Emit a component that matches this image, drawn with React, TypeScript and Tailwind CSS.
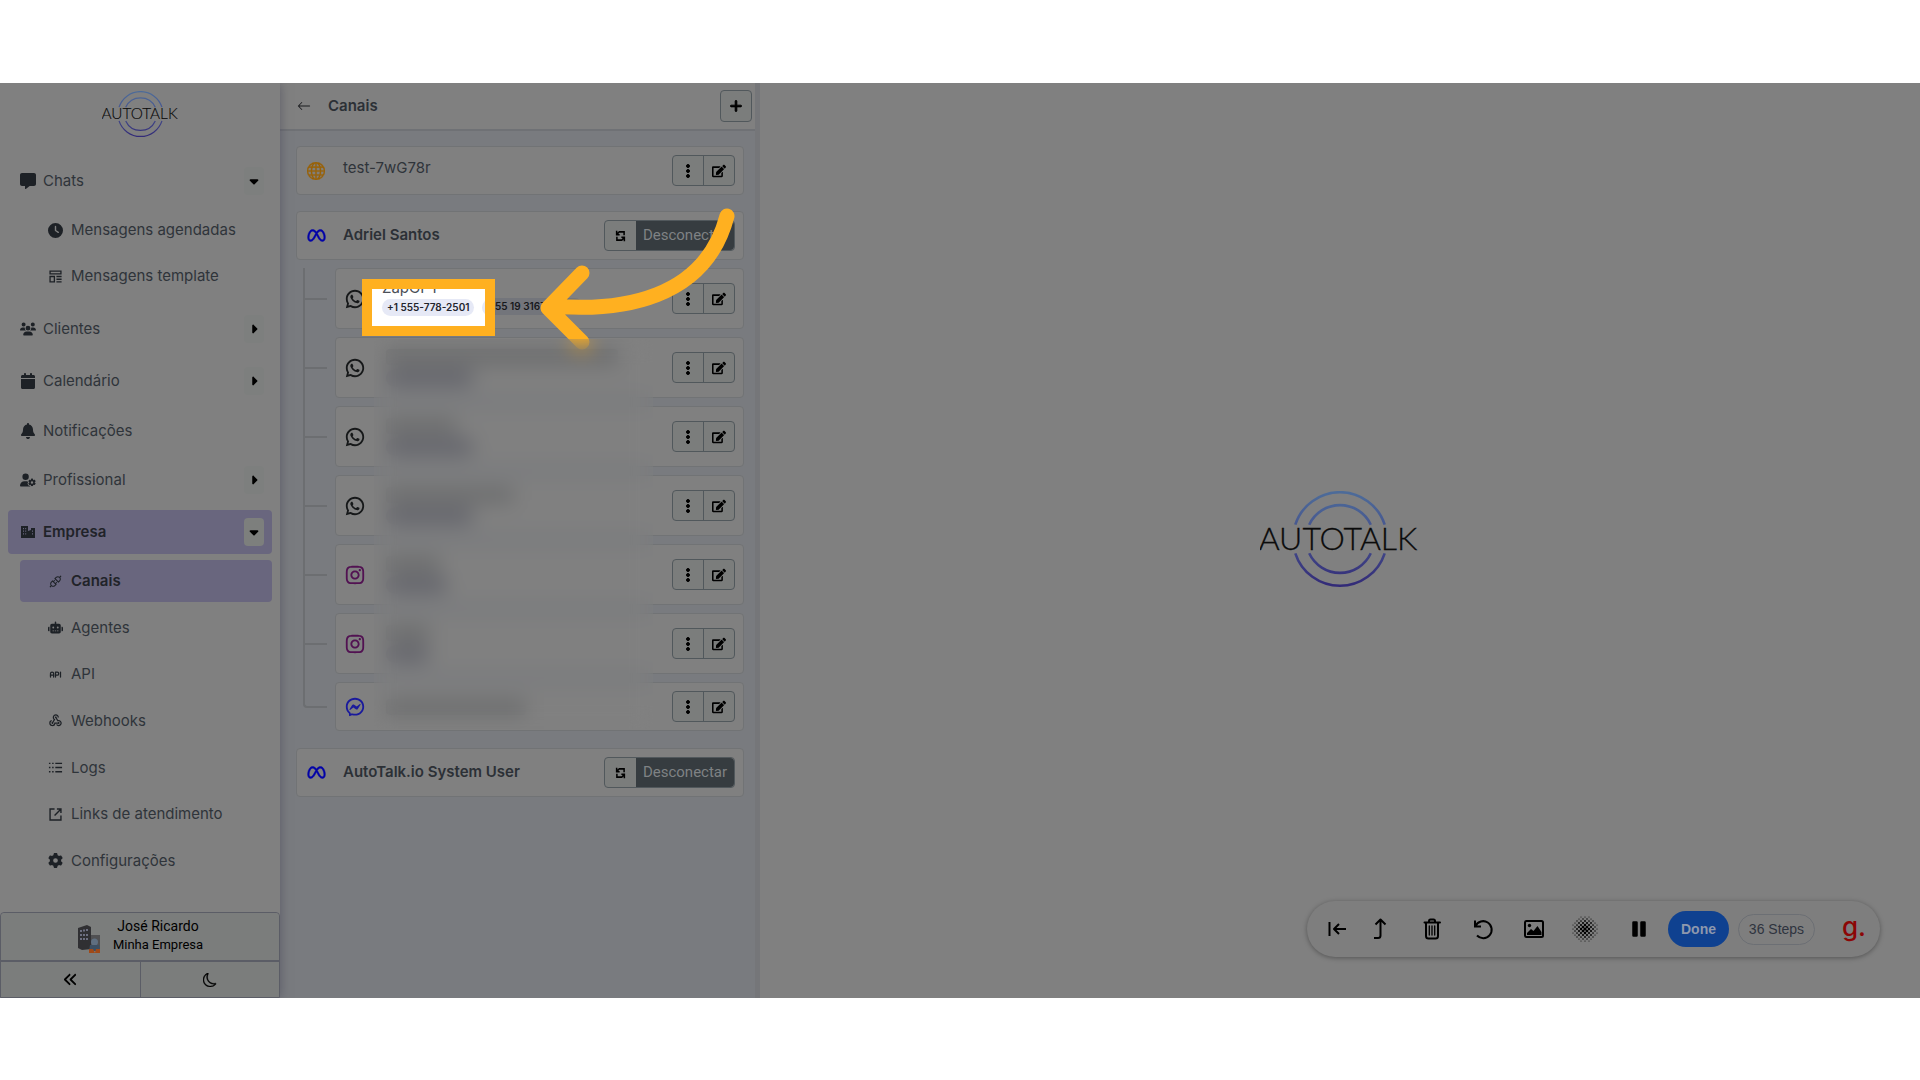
import React from "react";
import { AiOutlineApi } from "react-icons/ai";
import { BsArrowLeft, BsGlobe, BsMoon, BsThreeDotsVertical } from "react-icons/bs";
import {
  FaAnglesLeft,
  FaBell,
  FaCalendar,
  FaCaretDown,
  FaCaretRight,
  FaClock,
  FaGear,
  FaMessage,
  FaPlus,
  FaRobot,
  FaUserGear,
  FaUsers,
} from "react-icons/fa6";
import { FaEdit } from "react-icons/fa";
import { MdWebhook } from "react-icons/md";
import { RiInstagramLine, RiMessengerLine, RiMetaLine, RiWhatsappLine } from "react-icons/ri";
import { TbApi } from "react-icons/tb";

type IconType = React.ComponentType<{ className?: string }>;

const TemplateIcon: IconType = ({ className }) => (
  <svg viewBox="0 0 16 16" className={className} fill="none" stroke="currentColor" strokeWidth="1.4">
    <path d="M2.2 2.2h11.6v3H2.2zM2.2 8h4.6v5.8H2.2zM9 8h5.5M9 10.9h5.5M9 13.8h5.5" />
  </svg>
);

const CompanyIcon: IconType = ({ className }) => (
  <svg viewBox="0 0 16 16" className={className}>
    <path
      fill="currentColor"
      fillRule="evenodd"
      d="M1 2h7v5l3-1V4h4v10H1zM3 4v1.2h1V4zm2.2 0v1.2h1V4zM3 6.6v1.2h1V6.6zm2.2 0v1.2h1V6.6zM3 9.2v1.2h1V9.2zm2.2 0v1.2h1V9.2zM12 6.6v1.2h1V6.6zm0 2.6v1.2h1V9.2z"
    />
  </svg>
);

const LogsIcon: IconType = ({ className }) => (
  <svg viewBox="0 0 16 16" className={className} fill="none" stroke="currentColor" strokeWidth="1.4">
    <path d="M1 3.5h1.6M4.4 3.5H6M7.8 3.5H15M1 8h1.6M4.4 8H6M7.8 8H15M1 12.5h1.6M4.4 12.5H6M7.8 12.5H15" />
  </svg>
);

const LinkIcon: IconType = ({ className }) => (
  <svg viewBox="0 0 16 16" className={className} fill="none" stroke="currentColor" strokeWidth="1.5">
    <path d="M7 2.2H2.2v11.6h11.6V9M9.5 2.2h4.3v4.3M13.6 2.4 7 9" />
  </svg>
);

const SyncIcon: IconType = ({ className }) => (
  <svg viewBox="0 0 12 14" className={className} fill="none" stroke="currentColor" strokeWidth="1.8">
    <path d="M4 2.200h6.200v4M8 11.800H1.800v-4M1.500 1v4.500H5M1.800 5.200 4.200 2.400M10.500 13V8.500H7M10.200 8.800 7.800 11.600" />
  </svg>
);

type MenuItem = { label: string; icon: IconType; active?: boolean };

const chatItems: MenuItem[] = [
  { label: "Mensagens agendadas", icon: FaClock },
  { label: "Mensagens template", icon: TemplateIcon },
];

const companyItems: MenuItem[] = [
  { label: "Canais", icon: AiOutlineApi, active: true },
  { label: "Agentes", icon: FaRobot },
  { label: "API", icon: TbApi },
  { label: "Webhooks", icon: MdWebhook },
  { label: "Logs", icon: LogsIcon },
  { label: "Links de atendimento", icon: LinkIcon },
  { label: "Configurações", icon: FaGear },
];

type Channel = {
  id: number;
  icon: IconType;
  color: string;
  name?: string;
  tag?: string;
};

// name / tag hold the widths of the censored lines
const channels: Channel[] = [
  { id: 1, icon: RiWhatsappLine, color: "text-[#161819]" },
  { id: 2, icon: RiWhatsappLine, color: "text-[#161819]", name: "w-[232px]", tag: "w-[88px]" },
  { id: 3, icon: RiWhatsappLine, color: "text-[#161819]", name: "w-[70px]", tag: "w-[88px]" },
  { id: 4, icon: RiWhatsappLine, color: "text-[#161819]", name: "w-[128px]", tag: "w-[88px]" },
  { id: 5, icon: RiInstagramLine, color: "text-[#521252]", name: "w-[54px]", tag: "w-[62px]" },
  { id: 6, icon: RiInstagramLine, color: "text-[#521252]", name: "w-[44px]", tag: "w-[44px]" },
  { id: 7, icon: RiMessengerLine, color: "text-[#1a1a9c]", name: "w-[140px]" },
];

function Logo({ id, className }: { id: string; className: string }) {
  return (
    <svg viewBox="1 2 160 100" className={className} role="img" aria-label="Autotalk">
      <defs>
        <linearGradient id={id} gradientUnits="userSpaceOnUse" x1="0" y1="0" x2="0" y2="100">
          <stop offset="0" stopColor="#4d6d9a" />
          <stop offset="0.5" stopColor="#45508c" />
          <stop offset="1" stopColor="#312876" />
        </linearGradient>
      </defs>
      <g fill="none" stroke={`url(#${id})`} strokeWidth="2.6">
        <path d="M36.300 35.700A47 47 0 0 1 125.700 35.700M36.300 64.300A47 47 0 0 0 125.700 64.300" />
        <path d="M50.200 35.700A34 34 0 0 1 111.800 35.700M50.200 64.300A34 34 0 0 0 111.800 64.300" />
      </g>
      <text
        x="79"
        y="60.500"
        textAnchor="middle"
        fontSize="32"
        fill="#0b0b0b"
        stroke="#0b0b0b"
        strokeWidth="0.3"
        className="font-['Lato'] font-light"
      >
        AUTOTALK
      </text>
    </svg>
  );
}

function GroupItem({ label, icon: Icon, open, active }: MenuItem & { open?: boolean }) {
  return (
    <div
      className={
        active
          ? "flex h-11 items-center rounded bg-[#69667e] pr-2 pl-3 font-semibold text-[#212329]"
          : "flex h-11 items-center pr-2 pl-3 text-[#2f343a]"
      }
    >
      <a href="#" className="flex flex-1 items-center gap-[7px]">
        <Icon className="size-4 text-[#1d2126]" />
        {label}
      </a>
      <button
        type="button"
        aria-label={`Expandir ${label}`}
        className={
          active
            ? "flex h-7 w-5 items-center justify-center rounded bg-[#7d7f7d] text-black"
            : "flex h-7 w-5 items-center justify-center rounded bg-[#7d7f7e] text-black"
        }
      >
        {open ? <FaCaretDown className="size-[14px]" /> : <FaCaretRight className="size-[14px]" />}
      </button>
    </div>
  );
}

function SubItem({ label, icon: Icon, active }: MenuItem) {
  return (
    <li className="flex items-center">
      <a
        href="#"
        className={
          active
            ? "flex h-[42px] flex-1 items-center gap-2 rounded bg-[#69667e] pl-7 font-semibold text-[#212329]"
            : "flex h-[42px] flex-1 items-center gap-2 pl-7 text-[#2f343a]"
        }
      >
        <Icon className="size-[15px] text-[#1d2126]" />
        {label}
      </a>
    </li>
  );
}

function Sidebar() {
  return (
    <aside className="z-10 flex w-[280px] shrink-0 flex-col bg-[#808080] text-[15px] leading-5 shadow-[0_0_10px_rgba(60,60,80,0.5)]">
      <div className="flex justify-center pt-2">
        <Logo id="logo-small" className="h-12 w-[77px]" />
      </div>
      <nav className="flex flex-1 flex-col px-2 pt-5 pb-7">
        <GroupItem label="Chats" icon={FaMessage} open />
        <ul className="grid auto-rows-[46px] pt-1 pb-1 pl-3">
          {chatItems.map((item) => (
            <SubItem key={item.label} {...item} />
          ))}
        </ul>
        <div className="flex flex-col gap-2 pt-1">
          <GroupItem label="Clientes" icon={FaUsers} />
          <GroupItem label="Calendário" icon={FaCalendar} />
        </div>
        <a href="#" className="flex h-[55px] items-center gap-[7px] pl-3 text-[#2f343a]">
          <FaBell className="size-4 text-[#1d2126]" />
          Notificações
        </a>
        <div className="flex flex-col gap-2">
          <GroupItem label="Profissional" icon={FaUserGear} />
          <GroupItem label="Empresa" icon={CompanyIcon} open active />
        </div>
        <ul className="grid flex-1 auto-rows-fr pt-1 pl-3">
          {companyItems.map((item) => (
            <SubItem key={item.label} {...item} />
          ))}
        </ul>
      </nav>
      <footer className="rounded-t border border-[#5b5d66] text-black">
        <a href="#" className="flex h-[47px] items-center justify-center gap-3 rounded-t bg-[#7b7d7c]">
          <svg viewBox="0 0 24 30" className="mt-1 h-[30px] w-6">
            <path d="M1 4 10 1l4 2v22l-9 1-4-2z" fill="#303033" />
            <path d="M3 6h2v2H3zM6 5.500h2v2H6zM9 5h2v2H9zM3 10h2v2H3zM6 10h2v2H6zM9 10h2v2H9zM3 14h2v2H3zM6 14h2v2H6zM9 14h2v2H9z" fill="#6d6f80" />
            <path d="M14 11h9v14h-9z" fill="#505052" />
            <circle cx="17.500" cy="18" r="3.500" fill="#5f6f80" />
            <path d="M13 21h9l1 6H12z" fill="#3c4f62" />
            <path d="M12 25h4l2 4h-6zM19 25h4v4h-5z" fill="#a04a18" />
          </svg>
          <span className="pb-1 text-center font-['Roboto']">
            <span className="block text-[14px] leading-5">José Ricardo</span>
            <span className="block text-[13px] leading-[18px]">Minha Empresa</span>
          </span>
        </a>
        <div className="flex h-[37px] border-t-2 border-[#5b5d66] bg-[#7b7d7c]">
          <button type="button" aria-label="Recolher menu" className="flex flex-1 items-center justify-center border-r border-[#5b5d66]">
            <FaAnglesLeft className="size-[15px]" />
          </button>
          <button type="button" aria-label="Modo escuro" className="flex flex-1 items-center justify-center">
            <BsMoon className="size-[14px]" strokeWidth={0.5} />
          </button>
        </div>
      </footer>
    </aside>
  );
}

function ActionButtons() {
  return (
    <div className="flex h-[31px] w-[63px] rounded border border-[#51585c] bg-[#7b7d7c] text-black">
      <button type="button" aria-label="Mais opções" className="flex flex-1 items-center justify-center border-r border-[#51585c]">
        <BsThreeDotsVertical className="size-4" strokeWidth={1} />
      </button>
      <button type="button" aria-label="Editar" className="flex flex-1 items-center justify-center">
        <FaEdit className="size-[14px]" />
      </button>
    </div>
  );
}

function AccountCard({ name }: { name: string }) {
  return (
    <div className="flex h-[49px] items-center rounded border border-[#717375] bg-[#808080] pr-2 pl-[10px]">
      <RiMetaLine className="size-[19px] text-[#0303a8]" strokeWidth={0.6} />
      <span className="ml-[17px] flex-1 text-[15px] font-semibold text-[#2c3036]">{name}</span>
      <div className="flex h-[31px] rounded border border-[#51585c] bg-[#7b7d7c]">
        <button type="button" aria-label="Sincronizar" className="flex w-[31px] items-center justify-center text-black">
          <SyncIcon className="h-3 w-[11px]" />
        </button>
        <button type="button" className="w-[98px] rounded-r-sm bg-[#363c40] pb-px font-['Roboto'] text-[15px] leading-5 text-[#7f8284]">
          Desconectar
        </button>
      </div>
    </div>
  );
}

function ChannelRow({ channel, last }: { channel: Channel; last: boolean }) {
  const Icon = channel.icon;
  return (
    <li className="flex">
      <span className="flex w-6 flex-col">
        <span
          className={
            last
              ? "h-[26px] rounded-bl-sm border-b-2 border-l-2 border-[#6c6e71]"
              : "h-8 border-b-2 border-l-2 border-[#6c6e71]"
          }
        />
        {!last && <span className="flex-1 border-l-2 border-[#6c6e71]" />}
      </span>
      <div className={last ? "ml-2 flex-1" : "ml-2 flex-1 pb-2"}>
        <div
          className={
            last
              ? "flex h-[49px] items-center rounded border border-[#717375] bg-[#808080] pr-2 pl-2"
              : "flex h-[61px] items-center rounded border border-[#717375] bg-[#808080] pr-2 pl-2"
          }
        >
          <Icon className={`size-[22px] shrink-0 ${channel.color}`} />
          <div className="ml-5 flex flex-1 flex-col gap-1">
            {channel.name && <span className={`h-4 rounded bg-[#6c6d6e] ${channel.name}`} />}
            {channel.tag && <span className={`h-[18px] rounded-full bg-[#65666d] ${channel.tag}`} />}
            {channel.id === 1 && (
              <span className="mt-4 ml-[97px] flex h-[17px] w-[100px] items-center rounded-full bg-[#73757b] pl-3 text-[10px] font-semibold whitespace-nowrap text-[#17181c]">
                55 19 3167
              </span>
            )}
          </div>
          <ActionButtons />
        </div>
      </div>
    </li>
  );
}

function ChannelsPanel() {
  return (
    <section className="flex w-[480px] shrink-0 flex-col border-r-[5px] border-[#757679] bg-[#797b7f]">
      <header className="flex h-12 items-center border-b-2 border-[#6f7175] bg-[#808080] pr-[3px] pl-2">
        <button type="button" aria-label="Voltar" className="flex size-8 items-center justify-center rounded text-[#1b1c1f]">
          <BsArrowLeft className="size-[14px]" />
        </button>
        <h1 className="ml-2 flex-1 text-[15px] font-semibold text-[#2c3036]">Canais</h1>
        <button type="button" aria-label="Adicionar canal" className="flex size-8 items-center justify-center rounded border border-[#51585c] bg-[#7b7d7c] text-black">
          <FaPlus className="size-[14px]" stroke="currentColor" strokeWidth={30} />
        </button>
      </header>

      <div className="relative flex flex-1 flex-col pt-[15px] pr-[11px] pl-4">
        <div className="mb-4 flex h-[49px] items-center rounded border border-[#717375] bg-[#808080] pr-2 pl-[10px]">
          <BsGlobe className="size-[18px] text-[#9a6104]" strokeWidth={0.3} />
          <span className="ml-[18px] flex-1 pb-1 text-[15px] text-[#2f343a]">test-7wG78r</span>
          <ActionButtons />
        </div>
        <AccountCard name="Adriel Santos" />
        <ul className="mt-2 mb-[17px] pl-[7px]">
          {channels.map((channel, i) => (
            <ChannelRow key={channel.id} channel={channel} last={i === channels.length - 1} />
          ))}
        </ul>
        <AccountCard name="AutoTalk.io System User" />

        {/* Guide arrow, its tip runs under the censored area */}
        <svg viewBox="0 0 220 160" className="pointer-events-none absolute top-[69px] left-[250px] h-[160px] w-[220px]">
          <path
            d="M197 16C175 100 90 112 22 106M52 73 18 108 52 142"
            fill="none"
            stroke="#ffb020"
            strokeWidth="15"
            strokeLinecap="round"
            strokeLinejoin="round"
          />
        </svg>
        <div className="absolute top-[208px] left-[94px] h-[390px] w-[279px] backdrop-blur-[10px]" />

        {/* Highlighted number */}
        <div className="absolute top-[148px] left-[82px] flex h-[57px] w-[133px] flex-col justify-end overflow-hidden border-[10px] border-[#ffb020] bg-white pb-[10px] pl-[10px]">
          <span className="shrink-0 pb-px text-[15px] leading-5 text-[#4b5058]">ZapGPT</span>
          <div className="flex shrink-0 gap-2">
            <span className="flex h-[17px] shrink-0 items-center rounded-full bg-[#e6e9f6] px-[5px] text-[10px] font-semibold whitespace-nowrap text-[#22242c]">
              +1 555-778-2501
            </span>
            <span className="h-[17px] w-10 shrink-0 rounded-full bg-[#e6e9f6]" />
          </div>
        </div>
      </div>
    </section>
  );
}

// Halftone dots shrinking towards the edge
const dots: { x: number; y: number; r: number }[] = [];
for (let row = 0; row < 13; row++) {
  for (let col = 0; col < 13; col++) {
    const dist = Math.hypot(row - 6, col - 6);
    if ((row + col) % 2 === 0 && dist < 7) {
      dots.push({ x: col * 2, y: row * 2, r: 1.6 - dist * 0.17 });
    }
  }
}

function ToolButton({ label, narrow, children }: { label: string; narrow?: boolean; children: React.ReactNode }) {
  return (
    <button
      type="button"
      aria-label={label}
      className={narrow ? "flex h-9 w-[42px] items-center justify-center" : "flex h-9 w-[51px] items-center justify-center"}
    >
      <svg
        viewBox="0 0 24 24"
        className="size-6 overflow-visible"
        fill="none"
        stroke="currentColor"
        strokeWidth="2"
        strokeLinecap="round"
        strokeLinejoin="round"
      >
        {children}
      </svg>
    </button>
  );
}

function Toolbar() {
  return (
    <div className="absolute right-10 bottom-[41px] flex h-14 items-center rounded-full bg-[#7e7e7e] pr-3 pl-[10px] font-['Liberation_Sans'] text-black shadow-[0_1px_5px_rgba(0,0,0,0.35)]">
      <ToolButton label="Voltar ao início" narrow>
        <path d="M3.500 5v14M20 12H8.500M13 7l-5 5 5 5" strokeLinecap="butt" />
      </ToolButton>
      <ToolButton label="Ir para etapa" narrow>
        <path d="M6 21h4q2.500 0 2.500-2.500V3M7.500 7.500l5-5 5 5" strokeLinecap="butt" />
      </ToolButton>
      <span className="w-[5px]" />
      <ToolButton label="Excluir">
        <path d="M4.500 5.500h15.500v0M6 5.500v13.500q0 2.500 2.500 2.500h7q2.500 0 2.500-2.500V5.500M9 5V4q0-1.500 1.500-1.500h3Q15 2.500 15 4v1" />
        <path d="M9.300 9v9M12 9v9M14.700 9v9" strokeWidth="1.300" />
      </ToolButton>
      <ToolButton label="Refazer">
        <path d="M4 3.500v6h6M4.500 9a8.500 8.500 0 1 1 1.500 9.500" strokeLinecap="butt" strokeLinejoin="miter" />
      </ToolButton>
      <ToolButton label="Imagem">
        <rect x="3" y="4" width="18" height="16" rx="1.500" />
        <circle cx="7.500" cy="8.500" r="1.700" fill="currentColor" stroke="none" />
        <path d="M5 18v-2l4-4 2.500 2 4-5 4 6v3z" fill="currentColor" stroke="none" />
      </ToolButton>
      <ToolButton label="Desfocar">
        {dots.map((dot) => (
          <circle key={`${dot.x}-${dot.y}`} cx={dot.x} cy={dot.y} r={dot.r} fill="currentColor" stroke="none" />
        ))}
      </ToolButton>
      <span className="w-[3px]" />
      <ToolButton label="Pausar">
        <path d="M6.500 5.500h3v13h-3zM14.500 5.500h3v13h-3z" fill="currentColor" strokeWidth="2.500" />
      </ToolButton>
      <button type="button" className="ml-1 h-9 w-[61px] rounded-full bg-[#0f4190] text-[14px] font-bold text-[#8d98ad]">
        Done
      </button>
      <button type="button" className="ml-[9px] h-[31px] w-[77px] rounded-full border border-[#6c6f74] text-[14px] text-[#2f343f]">
        36 Steps
      </button>
      <a href="#" aria-label="Guia" className="ml-[25px] flex h-10 w-7 items-center justify-center pb-1 font-['Inter'] text-[26px] leading-10 font-medium text-[#8c0606]">
        g.
      </a>
    </div>
  );
}

export default function App() {
  return (
    <div className="flex min-h-screen flex-col bg-white pt-[83px] pb-[82px] font-['Inter',sans-serif]">
      <div className="flex flex-1 overflow-hidden">
        <Sidebar />
        <ChannelsPanel />
        <main className="relative flex flex-1 items-center justify-center bg-[#808080]">
          <Logo id="logo-large" className="h-[100px] w-[160px]" />
          <Toolbar />
        </main>
      </div>
    </div>
  );
}
